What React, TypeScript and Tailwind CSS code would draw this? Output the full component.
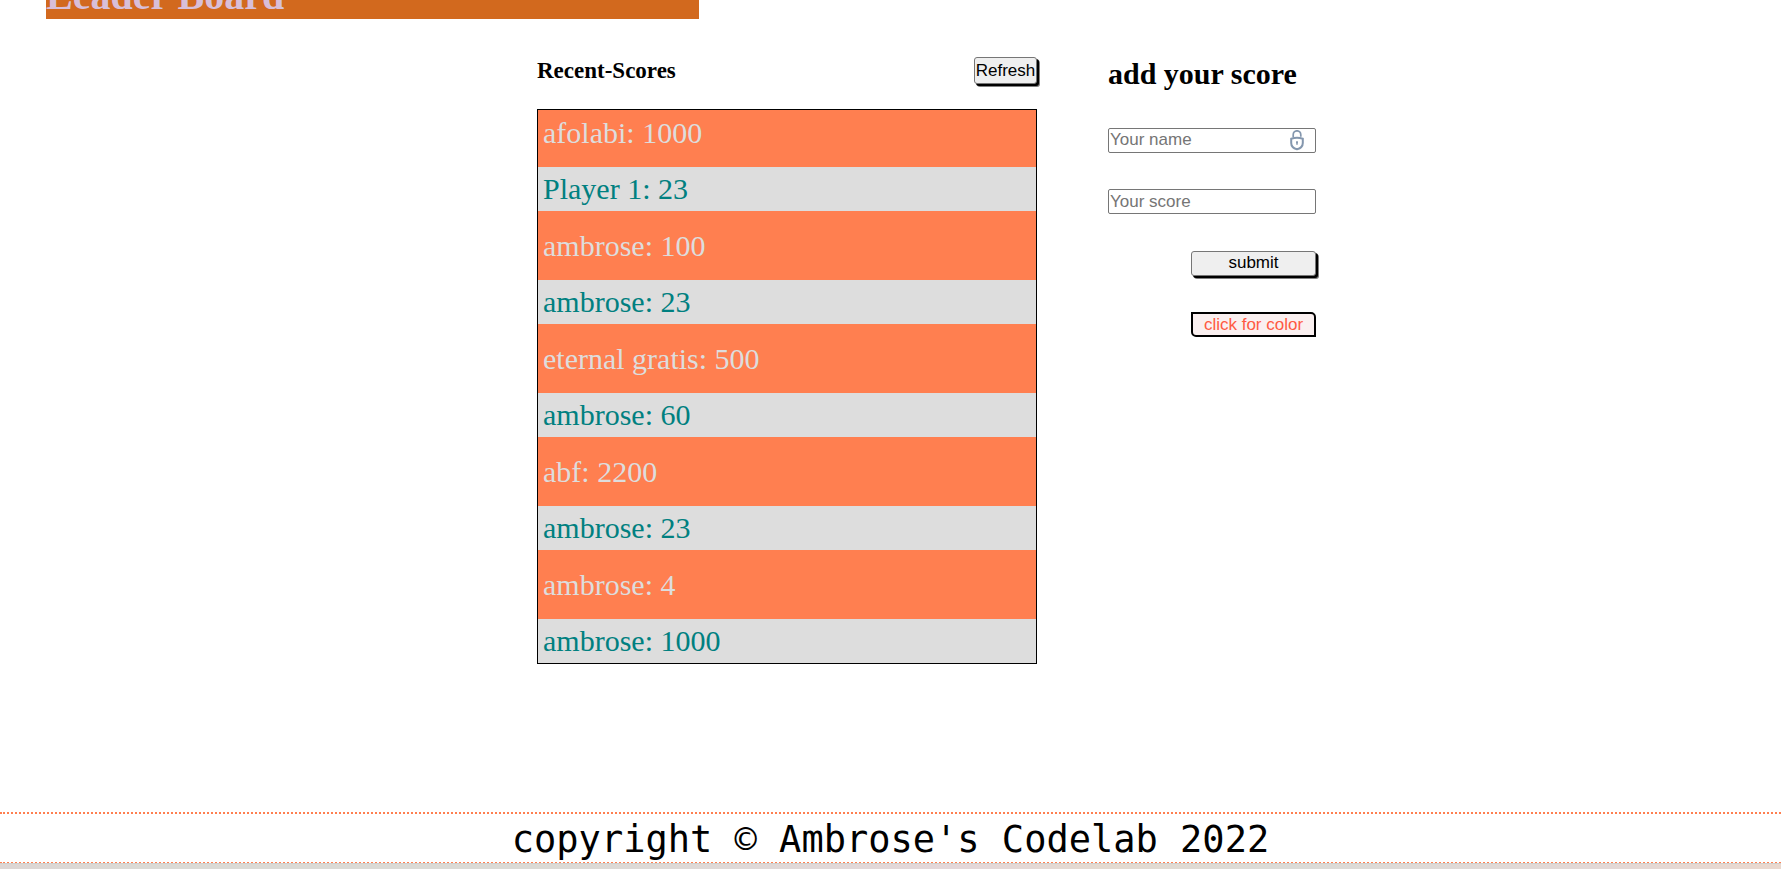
const scores = [
  { user: 'afolabi', score: 1000 },
  { user: 'Player 1', score: 23 },
  { user: 'ambrose', score: 100 },
  { user: 'ambrose', score: 23 },
  { user: 'eternal gratis', score: 500 },
  { user: 'ambrose', score: 60 },
  { user: 'abf', score: 2200 },
  { user: 'ambrose', score: 23 },
  { user: 'ambrose', score: 4 },
  { user: 'ambrose', score: 1000 },
]

const LockIcon = () => (
  <svg
    className="pointer-events-none absolute top-[2px] right-[12px] h-[21px] w-[14px]"
    viewBox="0 0 14 21"
    fill="none"
    stroke="#8497ae"
    aria-hidden="true"
  >
    <path d="M3.2 7.2V4.7a3.8 3.9 0 0 1 7.6 0v2" strokeWidth="1.7" />
    <path d="M1.2 8.7Q7 7 12.8 8.7v4.2c0 3-2.4 5.4-5.8 6.4-3.4-1-5.8-3.4-5.8-6.4z" strokeWidth="2" />
    <path d="M7 11.6v3.2" strokeWidth="1.5" />
    <circle cx="7" cy="12.2" r="1" fill="#8497ae" stroke="none" />
  </svg>
)

const ScoreList = () => (
  <section className="w-[500px]">
    <div className="flex items-center justify-between">
      <h3 className="text-[23px] leading-[27px] font-bold">Recent-Scores</h3>
      <button
        type="button"
        className="h-[27px] w-[63px] rounded-[3px] border border-[#767676] bg-[#efefef] text-center font-['Liberation_Sans',Arial,sans-serif] text-[17px] leading-5 shadow-[2px_2px_0_#000,3px_3px_0_#808080]"
      >
        Refresh
      </button>
    </div>
    <ul className="mt-[25px] border border-black bg-[#ff7f50]">
      {scores.map((item, i) => (
        <li
          key={i}
          className="h-11 pl-[5px] text-[30px] odd:mb-[13px] odd:leading-[46px] odd:text-[#dddddd] even:mb-3 even:bg-[#dddddd] even:leading-11 even:text-[#008080] even:last:mb-0"
        >
          {item.user}: {item.score}
        </li>
      ))}
    </ul>
  </section>
)

const ScoreForm = () => (
  <section className="w-[208px]">
    <h2 className="text-[30px] leading-[34px] font-bold">add your score</h2>
    <form
      className="mt-[37px] flex flex-col font-['Liberation_Sans',Arial,sans-serif] text-[17px] leading-5"
      onSubmit={(e) => e.preventDefault()}
    >
      <div className="flex flex-col gap-9">
        <div className="relative">
          <input
            type="text"
            aria-label="Your name"
            placeholder="Your name"
            className="block h-[25px] w-full rounded-[2px] border border-[#767676] px-px pb-px placeholder:text-[#757575]"
          />
          <LockIcon />
        </div>
        <input
          type="text"
          aria-label="Your score"
          placeholder="Your score"
          className="block h-[25px] w-full rounded-[2px] border border-[#767676] px-px placeholder:text-[#757575]"
        />
      </div>
      <div className="mt-[37px] flex w-[125px] flex-col gap-9 self-end">
        <button
          type="submit"
          className="h-[25px] rounded-[3px] border border-[#767676] bg-[#efefef] pb-px shadow-[2px_2px_0_#000,3px_3px_0_#808080]"
        >
          submit
        </button>
        <button
          type="button"
          className="h-[25px] rounded-tr-[5px] rounded-bl-[5px] border-2 border-black bg-[#faf0f0] text-[#ff5a43]"
        >
          click for color
        </button>
      </div>
    </form>
  </section>
)

export default function App() {
  return (
    <div className="bg-white font-['Liberation_Serif','Times_New_Roman',serif] text-black">
      <header className="px-[46px]">
        <div className="flex h-[19px] w-[653px] max-w-full items-end overflow-hidden bg-[#d2691e]">
          <h1 className="text-[40px] leading-[46px] font-bold text-[#d8bfd8]">Leader Board</h1>
        </div>
      </header>
      <main className="flex justify-center gap-[71px] pt-[38px] pl-[72px]">
        <ScoreList />
        <ScoreForm />
      </main>
      <footer className="mt-[148px] border-y-2 border-dotted border-[#ff7f50] pt-1 text-center font-['DejaVu_Sans_Mono',Consolas,monospace] text-[37px] leading-[44px]">
        <p>copyright © Ambrose's Codelab 2022</p>
      </footer>
      <div className="relative -mt-px h-[6px] border-t border-[#cfcfcc] bg-[linear-gradient(to_right,#ddd6d4,#dbdad5_8%,#dbdad5_30%,#e4d7d9_54%,#e4dad0_62%,#dbdbd7_72%,#e3d8d6_90%,#ead8ce)]" />
    </div>
  )
}
